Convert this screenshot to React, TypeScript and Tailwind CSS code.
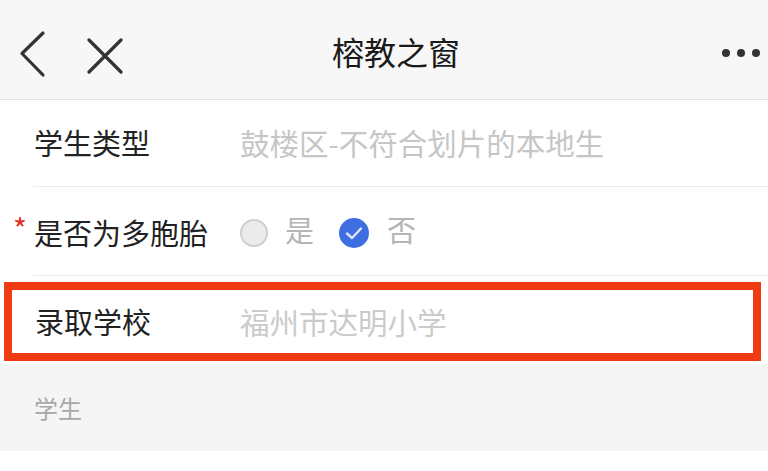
const FONT = "font-['Noto_Sans_CJK_SC','Noto_Sans',sans-serif]"

function Header() {
  return (
    <header className="relative h-[100px] bg-[#f7f7f7] border-b border-[#e2e2e2] flex items-center">
      <svg className="absolute left-[18px] top-[30px]" width="32" height="48" viewBox="0 0 32 48">
        <path d="M25 3 L4 23.5 L25 45" fill="none" stroke="#333" strokeWidth="3.2" strokeLinecap="round" strokeLinejoin="round" />
      </svg>
      <svg className="absolute left-[86px] top-[38px]" width="38" height="36" viewBox="0 0 38 36">
        <path d="M3 2 L35 34 M35 2 L3 34" fill="none" stroke="#333" strokeWidth="3.2" strokeLinecap="round" />
      </svg>
      <h1 className="w-full text-center text-[32px] text-[#1a1a1a] leading-none pl-[24px] mt-[2px]">榕教之窗</h1>
      <div className="absolute right-[8px] top-[49px] flex gap-[7px]">
        <span className="w-[8px] h-[8px] rounded-full bg-[#333]" />
        <span className="w-[8px] h-[8px] rounded-full bg-[#333]" />
        <span className="w-[8px] h-[8px] rounded-full bg-[#333]" />
      </div>
    </header>
  )
}

export default function App() {
  return (
    <div className={`w-[768px] h-[471px] bg-white overflow-hidden ${FONT}`}>
      <Header />

      {/* 学生类型 */}
      <div className="ml-[33px] h-[88px] border-b border-[#ececec] flex items-center -mt-[1px]">
        <span className="w-[207px] pl-[1px] text-[29px] text-[#222]">学生类型</span>
        <span className="text-[29.5px] text-[#c6c6c6]">鼓楼区-不符合划片的本地生</span>
      </div>

      {/* 是否为多胞胎 */}
      <div className="relative ml-[33px] h-[89px] border-b border-[#ececec] flex items-center pt-[4px]">
        <span className="absolute -left-[20px] top-[26px] text-[30px] text-[#e0332a] leading-none">*</span>
        <span className="w-[207px] pl-[1px] text-[29px] text-[#222]">是否为多胞胎</span>
        <div className="flex items-center">
          <span className="w-[28px] h-[28px] rounded-full border-2 border-[#cfcfcf] bg-[#ebebeb]" />
          <span className="ml-[17px] text-[29px] text-[#b5b5b5] -mt-[6px]">是</span>
          <span className="ml-[25px] w-[30px] h-[30px] rounded-full bg-[#3f6de2] flex items-center justify-center">
            <svg width="18" height="14" viewBox="0 0 18 14">
              <path d="M2 7.5 L7 12 L16 2.5" fill="none" stroke="#dfe6fb" strokeWidth="2.4" strokeLinecap="round" strokeLinejoin="round" />
            </svg>
          </span>
          <span className="ml-[18px] text-[29px] text-[#b5b5b5] -mt-[6px]">否</span>
        </div>
      </div>

      {/* 录取学校 (highlighted) */}
      <div className="mt-[6px] mx-[4px] w-[757px] h-[79px] border-[8px] border-[#f03a12] flex items-center">
        <span className="w-[228px] pl-[23px] text-[29px] text-[#222]">录取学校</span>
        <span className="text-[29.5px] text-[#cbcbcb]">福州市达明小学</span>
      </div>

      {/* 学生 section */}
      <div className="mt-[3px] h-[87px] bg-[#f5f5f5] flex items-center pl-[34px]">
        <span className="text-[24px] text-[#a8a8a8]">学生</span>
      </div>
    </div>
  )
}
